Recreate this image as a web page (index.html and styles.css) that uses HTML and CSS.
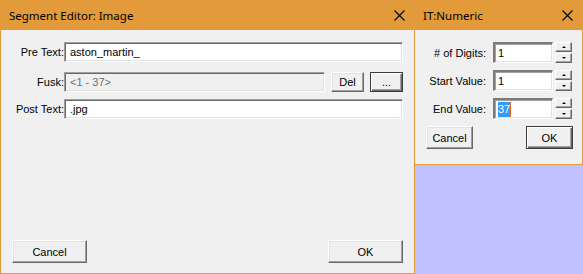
FILE: index.html
```html
<!DOCTYPE html>
<html lang="en">
<head>
  <meta charset="UTF-8" />
  <title>Segment Editor: Image</title>
  <link rel="stylesheet" href="styles.css">
</head>
<body>
  <div class="window editor">
    <div class="titlebar">
      <span class="title">Segment Editor: Image</span>
      <svg class="close" width="11" height="11" viewBox="0 0 11 11"><path d="M0.5 0.5L10.5 10.5M10.5 0.5L0.5 10.5" /></svg>
    </div>
    <div class="pane">
      <div class="row first">
        <span class="label">Pre Text:</span>
        <div class="edit grow">aston_martin_</div>
      </div>
      <div class="row second">
        <span class="label">Fusk:</span>
        <div class="edit grow disabled">&lt;1 - 37&gt;</div>
        <div class="btn small">Del</div>
        <div class="btn small default">...</div>
      </div>
      <div class="row third">
        <span class="label">Post Text:</span>
        <div class="edit grow">.jpg</div>
      </div>
      <div class="actions">
        <div class="btn wide">Cancel</div>
        <div class="btn wide">OK</div>
      </div>
    </div>
  </div>

  <div class="side">
    <div class="window numeric">
      <div class="titlebar">
        <span class="title">IT:Numeric</span>
        <svg class="close" width="11" height="11" viewBox="0 0 11 11"><path d="M0.5 0.5L10.5 10.5M10.5 0.5L0.5 10.5" /></svg>
      </div>
      <div class="pane">
        <div class="num-row">
          <span class="num-label"># of Digits:</span>
          <div class="edit num">1</div>
          <div class="spin"><div class="spin-btn up"></div><div class="spin-btn down"></div></div>
        </div>
        <div class="num-row">
          <span class="num-label">Start Value:</span>
          <div class="edit num">1</div>
          <div class="spin"><div class="spin-btn up"></div><div class="spin-btn down"></div></div>
        </div>
        <div class="num-row">
          <span class="num-label">End Value:</span>
          <div class="edit num"><span class="selected">37</span><span class="caret"></span></div>
          <div class="spin"><div class="spin-btn up"></div><div class="spin-btn down"></div></div>
        </div>
        <div class="num-actions">
          <div class="btn mid">Cancel</div>
          <div class="btn mid default">OK</div>
        </div>
      </div>
    </div>
    <div class="backdrop"></div>
  </div>
</body>
</html>
```

FILE: styles.css
```css
* {
  box-sizing: border-box;
  margin: 0;
  padding: 0;
}

body {
  width: 583px;
  height: 274px;
  overflow: hidden;
  display: flex;
  font-family: 'Liberation Sans', Arial, sans-serif;
  font-size: 11px;
  color: #000;
  background: #c0c0ff;
}

.window {
  background: #f0f0f0;
  display: flex;
  flex-direction: column;
}

.titlebar {
  height: 30px;
  background: #e29a3b;
  display: flex;
  align-items: center;
  justify-content: space-between;
  padding: 0 9px 0 8px;
}

.title {
  font-family: 'Noto Sans', sans-serif;
  font-size: 11.5px;
  color: #000;
}

.close path {
  stroke: #000;
  stroke-width: 1.1;
  fill: none;
}

/* left dialog */
.editor {
  width: 415px;
  height: 274px;
  border-left: 1px solid #e29a3b;
  border-right: 1px solid #e29a3b;
  border-bottom: 1px solid #e29a3b;
}

.editor .titlebar {
  margin-left: -1px;
  margin-right: -1px;
  padding-left: 9px;
  padding-right: 10px;
}

.editor .pane {
  flex: 1;
  display: flex;
  flex-direction: column;
  padding: 12px 11px 10px 0;
}

.row {
  display: flex;
  align-items: center;
  height: 20px;
}

.row.second {
  margin-top: 10px;
  gap: 6px;
}

.row.third {
  margin-top: 7px;
}

.label {
  width: 63px;
  text-align: right;
}

.row.second .label {
  margin-right: -6px;
}

.edit {
  height: 100%;
  background: #fff;
  border: 1px solid;
  border-color: #a0a0a0 #fff #fff #a0a0a0;
  box-shadow: inset 1px 1px #696969, inset -1px -1px #e3e3e3;
  padding: 0 5px;
  display: flex;
  align-items: center;
  white-space: nowrap;
}

.grow {
  flex: 1;
}

.edit.disabled {
  background: #f0f0f0;
  color: #6d6d6d;
}

.btn {
  background: #f0f0f0;
  border: 1px solid;
  border-color: #fff #696969 #696969 #fff;
  box-shadow: inset -1px -1px #a0a0a0, inset 1px 1px #e3e3e3;
  display: flex;
  align-items: center;
  justify-content: center;
}

.btn.default {
  border-color: #3c3c3c;
  box-shadow: inset 1px 1px #fff, inset -1px -1px #696969, inset -2px -2px #a0a0a0;
}

.btn.small {
  width: 33px;
  height: 20px;
}

.btn.wide {
  width: 75px;
  height: 23px;
}

.actions {
  margin-top: auto;
  display: flex;
  justify-content: space-between;
  padding-left: 11px;
}

/* right dialog */
.side {
  width: 168px;
  display: flex;
  flex-direction: column;
}

.numeric {
  height: 165px;
  border-right: 1px solid #e29a3b;
  border-bottom: 1px solid #e29a3b;
}

.numeric .titlebar {
  margin-right: -1px;
  padding-right: 10px;
}

.numeric .pane {
  flex: 1;
  padding: 12px 9px 0 0;
}

.num-row {
  display: flex;
  align-items: center;
  height: 21px;
  margin-bottom: 7px;
}

.num-label {
  width: 71px;
  text-align: right;
  margin-right: 7px;
}

.edit.num {
  width: 60px;
  border-width: 2px 1px 1px 2px;
  border-color: #7a7a7a #fff #fff #7a7a7a;
  box-shadow: inset 1px 1px #a0a0a0, inset -1px -1px #e3e3e3;
  padding: 0 3px;
}

.selected {
  background: #3399ff;
  color: #fff;
  line-height: 15px;
}

.caret {
  width: 1px;
  height: 15px;
  background: #e07020;
}

.spin {
  margin-left: 2px;
  width: 17px;
  height: 21px;
  display: flex;
  flex-direction: column;
  gap: 1px;
}

.spin-btn {
  flex: 1;
  background: #f0f0f0;
  border: 1px solid;
  border-color: #fff #696969 #696969 #fff;
  box-shadow: inset -1px -1px #a0a0a0;
  display: flex;
  align-items: center;
  justify-content: center;
}

.spin-btn::after {
  content: "";
  border-left: 2px solid transparent;
  border-right: 2px solid transparent;
}

.spin-btn.up::after {
  border-bottom: 2px solid #000;
}

.spin-btn.down::after {
  border-top: 2px solid #000;
}

.num-actions {
  margin-top: 4px;
  display: flex;
  justify-content: space-between;
  padding-left: 11px;
}

.btn.mid {
  width: 47px;
  height: 23px;
}

.backdrop {
  flex: 1;
  background: #c0c0ff;
  border-left: 1px solid #e29a3b;
  margin-left: -1px;
}
```
